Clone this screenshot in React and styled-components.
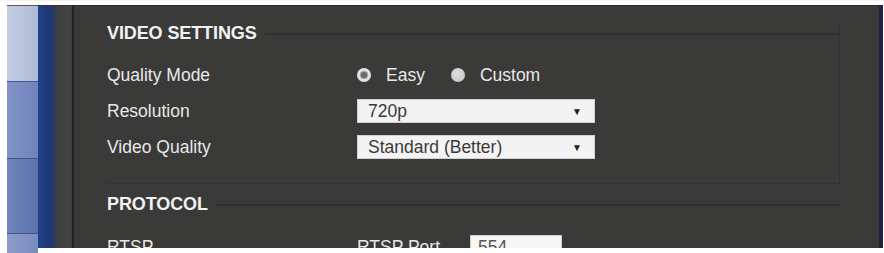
import React from "react";
import styled, { createGlobalStyle } from "styled-components";

const Global = createGlobalStyle`
  html, body { margin: 0; padding: 0; background: #ffffff; }
  body { font-family: "Liberation Sans", Arial, sans-serif; }
  * { box-sizing: border-box; }
`;

const Frame = styled.div`
  width: 884px;
  height: 253px;
  padding: 4px 1px 5px 7px;
  display: flex;
  background: #ffffff;
  border-top: 1px solid #f4f4f4;
  overflow: hidden;
`;

const Sidebar = styled.div`
  width: 31px;
  display: flex;
  flex-direction: column;
  border-top: 1px solid #555;
`;

const SideItem = styled.div`
  height: ${(p) => p.$h}px;
  flex-shrink: 0;
  background: ${(p) => p.$bg};
  border-bottom: 1px solid #3f5691;
`;

const NavStrip = styled.div`
  width: 17px;
  background: linear-gradient(90deg, #23428a 0%, #1b3774 60%, #243a6a 100%);
  border-top: 1px solid #333;
`;

const Gutter = styled.div`
  width: 19px;
  background: linear-gradient(90deg, #3b3d3f 0%, #454543 70%, #3e3e3c 100%);
  border-right: 2px solid #222222;
  border-top: 1px solid #333;
`;

const Main = styled.div`
  flex: 1;
  background: #3a3a39;
  padding: 16px 39px 0 33px;
  overflow: hidden;
  border-top: 1px solid #2a2a2a;
`;

const RightEdge = styled.div`
  width: 4px;
  background: #1c2344;
`;

const Section = styled.section`
  border-right: ${(p) => (p.$boxed ? "1px solid #323232" : "none")};
  border-bottom: ${(p) => (p.$boxed ? "1px solid #333333" : "none")};
  padding-bottom: ${(p) => p.$pb || 0}px;
`;

const TitleRow = styled.div`
  display: flex;
  align-items: center;
  gap: 8px;
  height: 22px;
  margin-top: ${(p) => p.$mt || 0}px;
`;

const Title = styled.h2`
  margin: 0;
  font-size: 18px;
  font-weight: bold;
  color: #f2f2f2;
  white-space: nowrap;
  letter-spacing: -0.1px;
`;

const Rule = styled.div`
  flex: 1;
  height: 2px;
  margin-top: 2px;
  background: #303030;
`;

const Form = styled.div`
  display: grid;
  grid-template-columns: 250px 1fr;
  grid-auto-rows: 36px;
  margin-top: ${(p) => p.$mt || 0}px;
`;

const Label = styled.div`
  display: flex;
  align-items: center;
  font-size: 17.5px;
  color: #e8e8e8;
  white-space: nowrap;
`;

const Field = styled.div`
  display: flex;
  align-items: center;
`;

const RadioOption = styled.label`
  display: flex;
  align-items: center;
  gap: 15px;
  margin-right: 26px;
  font-size: 17.5px;
  color: #e8e8e8;
`;

const RadioDot = styled.span`
  width: 14px;
  height: 14px;
  border-radius: 50%;
  background: ${(p) => (p.$checked ? "#e2e2e2" : "radial-gradient(circle at 45% 40%, #e0e0e0, #bdbdbd)")};
  display: flex;
  align-items: center;
  justify-content: center;
  &::after {
    content: "";
    display: ${(p) => (p.$checked ? "block" : "none")};
    width: 6px;
    height: 6px;
    border-radius: 50%;
    background: #6a6a6a;
    box-shadow: 0 0 0 1px #9a9a9a;
  }
`;

const Select = styled.div`
  width: 238px;
  height: 24px;
  background: #f3f3f3;
  border: 1px solid #d0d0d0;
  display: flex;
  align-items: center;
  justify-content: space-between;
  padding: 0 12px 0 10px;
  font-size: 17.5px;
  color: #3a3a3a;
`;

const Arrow = styled.span`
  font-size: 10px;
  color: #222;
`;

const InlineField = styled.div`
  display: flex;
  align-items: center;
  gap: 30px;
`;

const TextInput = styled.div`
  width: 92px;
  height: 24px;
  background: #f6f6f6;
  border: 1px solid #cfcfcf;
  padding: 0 7px;
  display: flex;
  align-items: center;
  font-size: 17.5px;
  color: #555;
`;

const sideItems = [
  { h: 76, bg: "linear-gradient(90deg, #c3cde2, #aebbd6)" },
  { h: 77, bg: "linear-gradient(90deg, #8393c6, #6f82ba)" },
  { h: 75, bg: "linear-gradient(90deg, #6f84bb, #5d73ad)" },
  { h: 20, bg: "linear-gradient(90deg, #8c9cc9, #7a8bbf)" },
];

export default function App() {
  return (
    <>
      <Global />
      <Frame>
        <Sidebar>
          {sideItems.map((s, i) => (
            <SideItem key={i} $h={s.h} $bg={s.bg} />
          ))}
        </Sidebar>
        <NavStrip />
        <Gutter />
        <Main>
          <Section $boxed $pb={18}>
            <TitleRow>
              <Title>VIDEO SETTINGS</Title>
              <Rule />
            </TitleRow>
            <Form $mt={13}>
              <Label>Quality Mode</Label>
              <Field>
                <RadioOption>
                  <RadioDot $checked />
                  Easy
                </RadioOption>
                <RadioOption>
                  <RadioDot />
                  Custom
                </RadioOption>
              </Field>
              <Label>Resolution</Label>
              <Field>
                <Select>
                  720p
                  <Arrow>▼</Arrow>
                </Select>
              </Field>
              <Label>Video Quality</Label>
              <Field>
                <Select>
                  Standard (Better)
                  <Arrow>▼</Arrow>
                </Select>
              </Field>
            </Form>
          </Section>
          <Section>
            <TitleRow $mt={9}>
              <Title>PROTOCOL</Title>
              <Rule />
            </TitleRow>
            <Form $mt={14}>
              <Label>RTSP</Label>
              <Field>
                <InlineField>
                  <Label>RTSP Port</Label>
                  <TextInput>554</TextInput>
                </InlineField>
              </Field>
            </Form>
          </Section>
        </Main>
        <RightEdge />
      </Frame>
    </>
  );
}
